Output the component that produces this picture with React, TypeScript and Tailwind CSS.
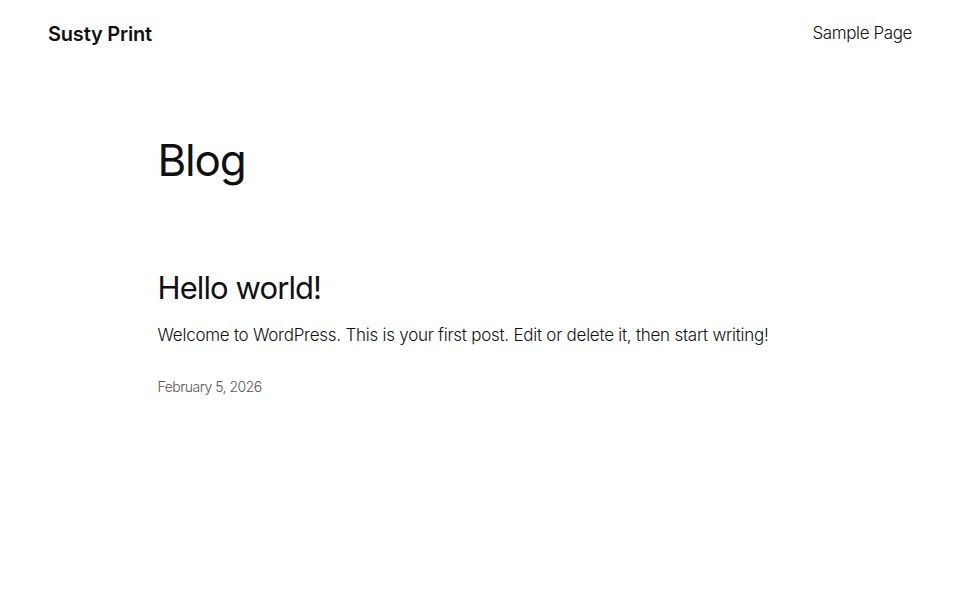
export default function App() {
  return (
    <div className="min-h-[600px] bg-white text-[#111111]" style={{ fontFamily: 'Inter, "Noto Sans", sans-serif' }}>
      <header className="flex items-center justify-between px-12 h-[68px]">
        <div className="text-[20px] font-semibold tracking-[-0.2px]">Susty Print</div>
        <nav className="text-[17px] font-light tracking-[-0.4px]">Sample Page</nav>
      </header>
      <main className="mx-auto w-[645px]">
        <h1 className="mt-[66px] text-[44px] font-normal tracking-[-1.2px] leading-[1.2]">Blog</h1>
        <article className="mt-[82px]">
          <h2 className="text-[31px] font-normal tracking-[-0.9px] leading-[1.2]">Hello world!</h2>
          <p className="mt-[18px] text-[17px] font-light tracking-[-0.25px] leading-[1.4]">
            Welcome to WordPress. This is your first post. Edit or delete it, then start writing!
          </p>
          <div className="mt-[28px] text-[14px] font-light tracking-[-0.5px] text-[#555]">February 5, 2026</div>
        </article>
      </main>
    </div>
  );
}
